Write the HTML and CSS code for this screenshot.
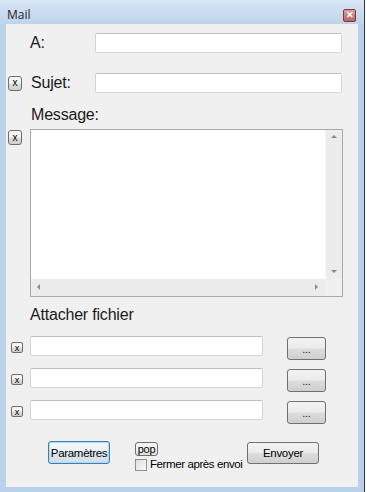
FILE: index.html
```html
<!DOCTYPE html>
<html lang="fr">
<head>
    <meta charset="UTF-8">
    <meta name="viewport" content="width=device-width, initial-scale=1.0">
    <title>Mail</title>
    <link rel="stylesheet" href="styles.css">
</head>

<body>
    <div class="window">
        <div class="titlebar">
            <span class="title">Mail</span>
            <span class="close">&#x2715;</span>
        </div>

        <div class="client">
            <div class="row row-a">
                <span class="label">A:</span>
                <div class="input wide"></div>
            </div>

            <div class="row row-sujet">
                <button class="xbtn">x</button>
                <span class="label">Sujet:</span>
                <div class="input wide"></div>
            </div>

            <div class="label label-block msg-label">Message:</div>

            <div class="row row-message">
                <button class="xbtn">x</button>
                <div class="textarea">
                    <div class="text"></div>
                    <div class="vscroll">
                        <span class="arrow up"></span>
                        <span class="arrow down"></span>
                    </div>
                    <div class="hscroll">
                        <span class="arrow left"></span>
                        <span class="arrow right"></span>
                    </div>
                    <div class="corner"></div>
                </div>
            </div>

            <div class="label label-block attach-label">Attacher fichier</div>

            <div class="attach">
                <div class="row attach-row">
                    <button class="xbtn small">x</button>
                    <div class="input file"></div>
                    <button class="btn browse">...</button>
                </div>
                <div class="row attach-row">
                    <button class="xbtn small">x</button>
                    <div class="input file"></div>
                    <button class="btn browse">...</button>
                </div>
                <div class="row attach-row">
                    <button class="xbtn small">x</button>
                    <div class="input file"></div>
                    <button class="btn browse">...</button>
                </div>
            </div>

            <div class="footer">
                <button class="btn params">Paramètres</button>
                <div class="middle">
                    <button class="pop">pop</button>
                    <label class="check"><span class="box"></span>Fermer après envoi</label>
                </div>
                <button class="btn send">Envoyer</button>
            </div>
        </div>
    </div>
</body>
</html>
```

FILE: styles.css
```css
* {
    box-sizing: border-box;
}

body {
    margin: 0;
    background-color: #fff;
    font-family: 'Liberation Sans', Arial, sans-serif;
}

.window {
    width: 365px;
    height: 492px;
    background-color: #b9d1ea;
    border-right: 1px solid #2b3a4a;
    padding: 0 6px 5px 6px;
    display: flex;
    flex-direction: column;
}

.titlebar {
    height: 24px;
    margin: 0 -6px;
    padding: 0 8px 0 7px;
    background: linear-gradient(#d9e6f5, #bed4eb);
    display: flex;
    align-items: center;
    justify-content: space-between;
}

.title {
    font-family: 'Open Sans', 'Noto Sans', sans-serif;
    font-size: 12px;
    color: #1e1e1e;
    margin-top: 4px;
}

.close {
    width: 13px;
    height: 13px;
    margin-top: 6px;
    border: 1px solid #7a3a3a;
    border-radius: 2px;
    background: linear-gradient(#d9a3a3, #b76565);
    color: #fff;
    font-size: 9px;
    font-weight: bold;
    line-height: 11px;
    text-align: center;
}

.client {
    flex: 1;
    background-color: #f0f0f0;
    padding-top: 9px;
}

.row {
    display: flex;
    align-items: center;
}

.label {
    font-size: 16px;
    color: #1a1a1a;
    letter-spacing: -0.2px;
}

.row-a .label {
    margin-left: 24px;
    width: 65px;
}

.input {
    height: 20px;
    background-color: #fff;
    border: 1px solid #d5d5d5;
    border-top-color: #c0c0c0;
    border-radius: 2px;
}

.input.wide {
    width: 247px;
}

.row-sujet {
    margin-top: 20px;
}

.row-sujet .label {
    margin-left: 9px;
    width: 64px;
}

.xbtn {
    width: 14px;
    height: 15px;
    padding: 0;
    margin: 0 0 0 2px;
    border: 1px solid #6e6e6e;
    border-radius: 3px;
    background: linear-gradient(#f6f6f6 45%, #dcdcdc 55%, #cfcfcf);
    font-family: 'Liberation Sans', Arial, sans-serif;
    font-size: 10px;
    line-height: 12px;
    color: #000;
}

.xbtn.small {
    width: 12px;
    height: 11px;
    margin-left: 5px;
    margin-top: 6px;
    font-size: 9px;
    line-height: 8px;
    border-radius: 2px;
}

.label-block {
    margin-left: 25px;
    line-height: 18px;
}

.msg-label {
    margin-top: 13px;
}

.row-message {
    margin-top: 5px;
    align-items: flex-start;
}

.row-message .xbtn {
    margin-top: 1px;
}

.textarea {
    margin-left: 8px;
    width: 313px;
    height: 168px;
    border: 1px solid #a9a9a9;
    background-color: #fff;
    display: grid;
    grid-template-columns: 1fr 17px;
    grid-template-rows: 1fr 17px;
}

.vscroll,
.hscroll,
.corner {
    background-color: #ececec;
    position: relative;
}

.corner {
    background-color: #f0f0f0;
}

.vscroll {
    border-left: 1px solid #f6f6f6;
}

.arrow {
    position: absolute;
    width: 0;
    height: 0;
    border: 3px solid transparent;
}

.arrow.up {
    top: 5px;
    left: 5px;
    border-bottom: 3px solid #8a8a8a;
    border-top-width: 0;
}

.arrow.down {
    bottom: 6px;
    left: 5px;
    border-top: 3px solid #8a8a8a;
    border-bottom-width: 0;
}

.arrow.left {
    left: 6px;
    top: 5px;
    border-right: 3px solid #8a8a8a;
    border-left-width: 0;
}

.arrow.right {
    right: 7px;
    top: 5px;
    border-left: 3px solid #8a8a8a;
    border-right-width: 0;
}

.attach-label {
    margin-top: 9px;
    margin-left: 24px;
}

.attach {
    margin-top: 12px;
    display: flex;
    flex-direction: column;
    gap: 12px;
}

.attach-row {
    height: 20px;
    align-items: flex-start;
}

.input.file {
    margin-left: 7px;
    width: 233px;
}

.btn {
    height: 23px;
    padding: 0;
    margin: 0;
    border: 1px solid #707070;
    border-radius: 3px;
    background: linear-gradient(#f3f3f3 0%, #ebebeb 48%, #dddddd 52%, #cfcfcf 100%);
    font-family: 'Liberation Sans', Arial, sans-serif;
    font-size: 11.5px;
    letter-spacing: -0.3px;
    color: #000;
}

.btn.browse {
    margin-left: 24px;
    margin-top: 1px;
    width: 39px;
    font-size: 11px;
    line-height: 20px;
    color: #222;
}

.footer {
    margin-top: 21px;
    display: flex;
    align-items: flex-start;
}

.btn.params {
    margin-left: 42px;
    width: 62px;
    border-color: #3c7fb1;
    box-shadow: inset 0 0 0 1px #a9dcf6;
    background: linear-gradient(#f4f8fb 0%, #ebf1f6 48%, #dde6ee 52%, #d2dde6 100%);
}

.middle {
    margin-left: 25px;
    margin-top: 1px;
    display: flex;
    flex-direction: column;
    align-items: flex-start;
    width: 112px;
}

.pop {
    height: 14px;
    width: 23px;
    padding: 0;
    margin: 0;
    border: 1px solid #707070;
    border-radius: 3px;
    background: linear-gradient(#f3f3f3 50%, #dcdcdc);
    font-family: 'Liberation Sans', Arial, sans-serif;
    font-size: 11px;
    letter-spacing: -0.3px;
    line-height: 11px;
    color: #000;
}

.check {
    margin-top: 2px;
    display: flex;
    align-items: center;
    font-family: 'Liberation Sans', Arial, sans-serif;
    font-size: 11.5px;
    letter-spacing: -0.4px;
    line-height: 13px;
    color: #000;
    white-space: nowrap;
}

.box {
    width: 12px;
    height: 12px;
    margin-right: 3px;
    border: 1px solid #8e8f8f;
    background: linear-gradient(135deg, #dcdcdc, #fbfbfb);
}

.btn.send {
    margin-top: 1px;
    width: 72px;
    height: 22px;
}
```
